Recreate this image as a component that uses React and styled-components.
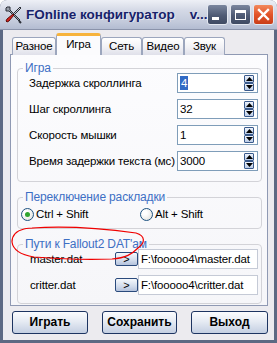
import React from 'react'
import styled, { createGlobalStyle, css } from 'styled-components'

const GlobalStyle = createGlobalStyle`
  html, body {
    margin: 0;
    padding: 0;
    width: 277px;
    height: 343px;
    overflow: hidden;
    background: #ffffff;
  }
  body {
    font-family: 'Liberation Sans', Arial, sans-serif;
    font-size: 11.5px;
    letter-spacing: -0.15px;
    color: #000;
  }
`

const tabs = [
  { label: 'Разное', w: 44 },
  { label: 'Игра', w: 45, active: true },
  { label: 'Сеть', w: 41 },
  { label: 'Видео', w: 42 },
  { label: 'Звук', w: 41 },
]

const gameRows = [
  { label: 'Задержка скроллинга', value: '4', selected: true },
  { label: 'Шаг скроллинга', value: '32' },
  { label: 'Скорость мышки', value: '1' },
  { label: 'Время задержки текста (мс)', value: '3000' },
]

const datRows = [
  { label: 'master.dat', path: 'F:\\fooooo4\\master.dat' },
  { label: 'critter.dat', path: 'F:\\fooooo4\\critter.dat' },
]

function ToolsIcon() {
  return (
    <svg width="19" height="19" viewBox="0 0 19 19">
      <path d="M3 2 L6 2 L6 5 L16 15 L15 16 L5 6 L2 6 L2 3 Z" fill="#9aa0aa" stroke="#2b2f38" strokeWidth="1" />
      <path d="M15 16 L17 18" stroke="#2b2f38" strokeWidth="2" />
      <path d="M16 2 L17 3 L10 10 L9 9 Z" fill="#c8ccd4" stroke="#2b2f38" strokeWidth="1" />
      <path d="M9 9 L10 10 L5 16 L3 17 L2 16 L3 14 Z" fill="#d8231e" stroke="#5a0c0a" strokeWidth="1" />
    </svg>
  )
}

function Spinner() {
  return (
    <SpinBox>
      <SpinButton>
        <svg width="7" height="4" viewBox="0 0 7 4"><path d="M0 4 L3.5 0 L7 4 Z" fill="#000" /></svg>
      </SpinButton>
      <SpinButton>
        <svg width="7" height="4" viewBox="0 0 7 4"><path d="M0 0 L3.5 4 L7 0 Z" fill="#000" /></svg>
      </SpinButton>
    </SpinBox>
  )
}

export default function App() {
  return (
    <>
      <GlobalStyle />
      <Window>
        <TitleBar>
          <ToolsIcon />
          <Title>FOnline конфигуратор    v...</Title>
          <Controls>
            <CtrlButton>
              <MinGlyph />
            </CtrlButton>
            <CtrlButton>
              <MaxGlyph />
            </CtrlButton>
            <CtrlButton $close>
              <svg width="13" height="13" viewBox="0 0 13 13">
                <path d="M2 2 L11 11 M11 2 L2 11" stroke="#fff" strokeWidth="2.4" strokeLinecap="square" />
              </svg>
            </CtrlButton>
          </Controls>
        </TitleBar>

        <Body>
          <TabStrip>
            {tabs.map((t) => (
              <Tab key={t.label} $w={t.w} $active={t.active}>
                {t.label}
              </Tab>
            ))}
          </TabStrip>

          <Panel>
            <Group>
              <Legend>Игра</Legend>
              <FieldGrid>
                {gameRows.map((r) => (
                  <React.Fragment key={r.label}>
                    <RowLabel>{r.label}</RowLabel>
                    <NumberField>
                      {r.selected ? <Selected>{r.value}</Selected> : r.value}
                      <Spinner />
                    </NumberField>
                  </React.Fragment>
                ))}
              </FieldGrid>
            </Group>

            <Group>
              <Legend>Переключение раскладки</Legend>
              <RadioRow>
                <RadioOption>
                  <Radio $checked />
                  Ctrl + Shift
                </RadioOption>
                <RadioOption>
                  <Radio />
                  Alt + Shift
                </RadioOption>
              </RadioRow>
            </Group>

            <Group>
              <Legend>Пути к Fallout2 DAT'ам</Legend>
              <PathGrid>
                {datRows.map((r) => (
                  <React.Fragment key={r.label}>
                    <DatLabel>{r.label}</DatLabel>
                    <BrowseButton>&gt;</BrowseButton>
                    <PathField>{r.path}</PathField>
                  </React.Fragment>
                ))}
              </PathGrid>
            </Group>
          </Panel>

          <ButtonRow>
            <PushButton $w={76}>Играть</PushButton>
            <PushButton $w={75}>Сохранить</PushButton>
            <PushButton $w={77}>Выход</PushButton>
          </ButtonRow>
        </Body>

        <Scribble width="277" height="343" viewBox="0 0 277 343">
          <path
            d="M32 228 C60 226 100 228 136 233 C146 236 145 243 138 248 C132 254 126 258 112 259 C90 260 60 259 34 257 C22 255 13 250 12 242 C12 236 16 231 24 229 C28 228 31 228 36 228"
            fill="none"
            stroke="#f00000"
            strokeWidth="1.2"
          />
        </Scribble>
      </Window>
    </>
  )
}

const Window = styled.div`
  position: relative;
  width: 277px;
  height: 343px;
  box-sizing: border-box;
  display: flex;
  flex-direction: column;
  background: #5d6983;
  border-radius: 7px 7px 0 0;
  overflow: hidden;
`

const TitleBar = styled.div`
  height: 30px;
  flex: none;
  box-sizing: border-box;
  display: flex;
  align-items: center;
  padding: 0 3px 1px 4px;
  background: linear-gradient(#eef0f6 0%, #d4d9e6 35%, #c3cadb 75%, #b3bcd1 100%);
  border-bottom: 1px solid #8a93aa;
`

const Title = styled.div`
  flex: 1;
  margin-left: 3px;
  white-space: pre;
  font-weight: bold;
  font-size: 13.5px;
  letter-spacing: 0;
  color: #17226a;
  text-shadow: 1px 1px 0 rgba(255, 255, 255, 0.5);
  overflow: hidden;
`

const Controls = styled.div`
  display: flex;
  gap: 2px;
  margin-top: 1px;
`

const CtrlButton = styled.div`
  position: relative;
  width: 21px;
  height: 21px;
  box-sizing: border-box;
  border-radius: 3px;
  border: 1px solid #e4e8f0;
  display: flex;
  align-items: center;
  justify-content: center;
  background: linear-gradient(#7a869e, #4f5b75 55%, #3f4a62);
  ${(p) =>
    p.$close &&
    css`
      background: linear-gradient(#f28a5e, #e2542a 50%, #c93e18);
    `}
`

const MinGlyph = styled.div`
  position: absolute;
  left: 4px;
  top: 12px;
  width: 7px;
  height: 3px;
  background: #fff;
`

const MaxGlyph = styled.div`
  width: 11px;
  height: 10px;
  box-sizing: border-box;
  border: 1px solid #fff;
  border-top-width: 3px;
`

const Body = styled.div`
  flex: 1;
  margin: 0 3px 3px;
  padding: 3px 6px 0 7px;
  background: #ecebef;
  display: flex;
  flex-direction: column;
`

const TabStrip = styled.div`
  display: flex;
  align-items: flex-end;
  height: 22px;
  padding-left: 2px;
  margin-bottom: -1px;
  position: relative;
  z-index: 1;
`

const Tab = styled.div`
  box-sizing: border-box;
  width: ${(p) => p.$w}px;
  height: 18px;
  border: 1px solid #9ca6bd;
  border-bottom: none;
  border-radius: 3px 3px 0 0;
  background: linear-gradient(#ffffff, #f1f1f5 55%, #dfe0ea);
  display: flex;
  align-items: center;
  justify-content: center;
  padding-bottom: 1px;
  ${(p) =>
    p.$active &&
    css`
      height: 22px;
      background: #fbfbfd;
      border-top: 3px solid #f7b33c;
      padding-bottom: 4px;
    `}
`

const Panel = styled.div`
  height: 252px;
  box-sizing: border-box;
  border: 1px solid #8f99b3;
  background: linear-gradient(#fcfcfe, #f6f6f9);
  padding: 7px 5px 0 6px;
  display: flex;
  flex-direction: column;
  gap: 9px;
`

const Group = styled.fieldset`
  margin: 0;
  padding: 0;
  min-width: 0;
  border: 1px solid #d3d3d8;
  border-radius: 4px;
`

const Legend = styled.legend`
  margin-left: 5px;
  padding: 0 2px;
  font-size: 12px;
  line-height: 12px;
  color: #3d6fc4;
`

const FieldGrid = styled.div`
  display: grid;
  grid-template-columns: 1fr 81px;
  row-gap: 6px;
  align-items: center;
  margin-top: -1px;
  padding: 0 3px 10px 11px;
`

const RowLabel = styled.div`
  line-height: 20px;
  white-space: nowrap;
`

const NumberField = styled.div`
  position: relative;
  height: 20px;
  box-sizing: border-box;
  border: 1px solid #7f9db9;
  background: #fff;
  display: flex;
  align-items: center;
  padding-left: 2px;
`

const Selected = styled.span`
  background: #316ac5;
  color: #fff;
  padding: 0 1px;
  line-height: 14px;
`

const SpinBox = styled.div`
  position: absolute;
  right: 3px;
  top: 1px;
  display: flex;
  flex-direction: column;
`

const SpinButton = styled.div`
  width: 10px;
  height: 8px;
  box-sizing: border-box;
  border: 1px solid #3a5a8c;
  border-radius: 1px;
  background: linear-gradient(#eef3fb, #b9cbe6);
  display: flex;
  align-items: center;
  justify-content: center;
`

const RadioRow = styled.div`
  display: grid;
  grid-template-columns: 119px 1fr;
  padding: 4px 0 7px 3px;
`

const RadioOption = styled.div`
  display: flex;
  align-items: center;
  gap: 2px;
  height: 14px;
`

const Radio = styled.span`
  width: 13px;
  height: 13px;
  box-sizing: border-box;
  border-radius: 50%;
  border: 1px solid #1c5180;
  background: radial-gradient(circle at 35% 35%, #ffffff 20%, #dcdcd7 100%);
  display: flex;
  align-items: center;
  justify-content: center;
  &::after {
    content: '';
    width: 5px;
    height: 5px;
    border-radius: 50%;
    background: ${(p) => (p.$checked ? '#2ea42e' : 'transparent')};
  }
`

const PathGrid = styled.div`
  display: grid;
  grid-template-columns: 1fr 23px 120px;
  row-gap: 6px;
  align-items: center;
  margin-top: -1px;
  padding: 0 3px 8px 12px;
`

const DatLabel = styled.div`
  line-height: 20px;
`

const BrowseButton = styled.div`
  height: 14px;
  box-sizing: border-box;
  border: 1px solid #2a4a7c;
  border-radius: 2px;
  background: linear-gradient(#f5f8fc, #d2dcec 60%, #b4c2dc);
  font-size: 11px;
  line-height: 12px;
  text-align: center;
`

const PathField = styled.div`
  height: 20px;
  box-sizing: border-box;
  border: 1px solid #c5cad6;
  background: #fff;
  padding-left: 2px;
  line-height: 18px;
  white-space: nowrap;
  overflow: hidden;
`

const ButtonRow = styled.div`
  display: flex;
  justify-content: space-between;
  padding: 5px 0 0 2px;
`

const PushButton = styled.div`
  width: ${(p) => p.$w}px;
  height: 23px;
  box-sizing: border-box;
  border: 1px solid #1d3461;
  border-radius: 3px;
  background: linear-gradient(#fbfcfe, #e6ebf3 45%, #c4cfe2);
  font-weight: bold;
  font-size: 12px;
  letter-spacing: 0;
  line-height: 21px;
  text-align: center;
`

const Scribble = styled.svg`
  position: absolute;
  left: 0;
  top: 0;
  pointer-events: none;
`
